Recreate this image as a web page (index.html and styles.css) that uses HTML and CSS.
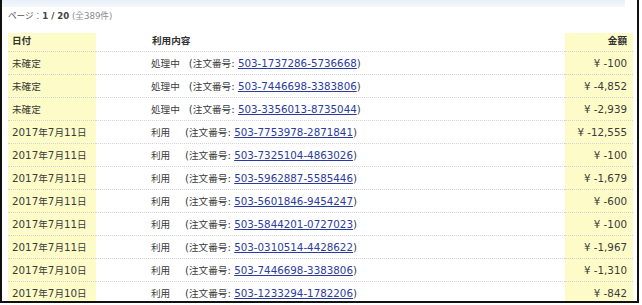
FILE: index.html
```html
<!DOCTYPE html>
<html lang="ja">
<head>
<meta charset="utf-8">
<link rel="stylesheet" href="styles.css">
</head>
<body>
<div class="frame">
  <div class="topband"></div>
  <div class="pager">ページ：<b>1 / 20</b> <span class="total">(全389件)</span></div>
  <table class="tx">
    <thead>
      <tr><th class="date"><span class="j">日付</span></th><th class="desc"><span class="j">利用内容</span></th><th class="amt"><span class="j">金額</span></th></tr>
    </thead>
    <tbody>
      <tr><td class="date"><span class="j">未確定</span></td><td class="desc"><span class="kind j">処理中</span>(<span class="j">注文番号</span>: <a href="#">503-1737286-5736668</a>)</td><td class="amt">¥ -100</td></tr>
      <tr><td class="date"><span class="j">未確定</span></td><td class="desc"><span class="kind j">処理中</span>(<span class="j">注文番号</span>: <a href="#">503-7446698-3383806</a>)</td><td class="amt">¥ -4,852</td></tr>
      <tr><td class="date"><span class="j">未確定</span></td><td class="desc"><span class="kind j">処理中</span>(<span class="j">注文番号</span>: <a href="#">503-3356013-8735044</a>)</td><td class="amt">¥ -2,939</td></tr>
      <tr><td class="date">2017<span class="j">年</span>7<span class="j">月</span>11<span class="j">日</span></td><td class="desc"><span class="kind j">利用</span>(<span class="j">注文番号</span>: <a href="#">503-7753978-2871841</a>)</td><td class="amt">¥ -12,555</td></tr>
      <tr><td class="date">2017<span class="j">年</span>7<span class="j">月</span>11<span class="j">日</span></td><td class="desc"><span class="kind j">利用</span>(<span class="j">注文番号</span>: <a href="#">503-7325104-4863026</a>)</td><td class="amt">¥ -100</td></tr>
      <tr><td class="date">2017<span class="j">年</span>7<span class="j">月</span>11<span class="j">日</span></td><td class="desc"><span class="kind j">利用</span>(<span class="j">注文番号</span>: <a href="#">503-5962887-5585446</a>)</td><td class="amt">¥ -1,679</td></tr>
      <tr><td class="date">2017<span class="j">年</span>7<span class="j">月</span>11<span class="j">日</span></td><td class="desc"><span class="kind j">利用</span>(<span class="j">注文番号</span>: <a href="#">503-5601846-9454247</a>)</td><td class="amt">¥ -600</td></tr>
      <tr><td class="date">2017<span class="j">年</span>7<span class="j">月</span>11<span class="j">日</span></td><td class="desc"><span class="kind j">利用</span>(<span class="j">注文番号</span>: <a href="#">503-5844201-0727023</a>)</td><td class="amt">¥ -100</td></tr>
      <tr><td class="date">2017<span class="j">年</span>7<span class="j">月</span>11<span class="j">日</span></td><td class="desc"><span class="kind j">利用</span>(<span class="j">注文番号</span>: <a href="#">503-0310514-4428622</a>)</td><td class="amt">¥ -1,967</td></tr>
      <tr><td class="date">2017<span class="j">年</span>7<span class="j">月</span>10<span class="j">日</span></td><td class="desc"><span class="kind j">利用</span>(<span class="j">注文番号</span>: <a href="#">503-7446698-3383806</a>)</td><td class="amt">¥ -1,310</td></tr>
      <tr><td class="date">2017<span class="j">年</span>7<span class="j">月</span>10<span class="j">日</span></td><td class="desc"><span class="kind j">利用</span>(<span class="j">注文番号</span>: <a href="#">503-1233294-1782206</a>)</td><td class="amt">¥ -842</td></tr>
    </tbody>
  </table>
</div>
</body>
</html>
```
FILE: styles.css
```css
html, body {
  margin: 0;
  padding: 0;
  background: #fff;
}
body {
  font-family: "DejaVu Sans", "Noto Sans CJK JP", sans-serif;
  font-size: 10.3px;
  color: #333;
}
.j {
  font-size: 9.6px;
}
.frame {
  width: 635px;
  height: 301px;
  border-left: 2px solid #111;
  border-right: 2px solid #111;
  border-bottom: 2px solid #111;
  overflow: hidden;
}
.topband {
  height: 7px;
  width: 623px;
  background: linear-gradient(#e8f0fa, #f4f8fc);
}
.pager {
  height: 18px;
  line-height: 18px;
  padding-left: 6px;
  color: #555;
  font-size: 8.6px;
}
.pager b {
  color: #444;
}
.pager .total {
  color: #8a8a8a;
}
.tx {
  margin-left: 6px;
  margin-top: 8px;
  width: 625px;
  border-collapse: collapse;
}
.tx th, .tx td {
  padding: 0;
  text-align: left;
  white-space: nowrap;
}
.tx th {
  height: 18px;
  font-weight: bold;
  color: #333;
  vertical-align: top;
  box-sizing: border-box;
  border-bottom: 1px dotted #d4d4d4;
}
.tx td {
  height: 23px;
  box-sizing: border-box;
  border-bottom: 1px dotted #d4d4d4;
  color: #3a3a3a;
}
.tx .date {
  width: 88px;
  background: #fdfcc8;
  padding-left: 4px;
  box-sizing: border-box;
}
.tx .desc {
  padding-left: 56px;
}
.tx td.desc {
  padding-left: 55px;
}
.tx .amt {
  width: 68px;
  background: #fdfcc8;
  text-align: right;
  padding-right: 6px;
  box-sizing: border-box;
}
.kind {
  display: inline-block;
  min-width: 25px;
  padding-right: 9px;
}
.tx a {
  color: #2b3b9e;
  text-decoration: underline;
}
```
